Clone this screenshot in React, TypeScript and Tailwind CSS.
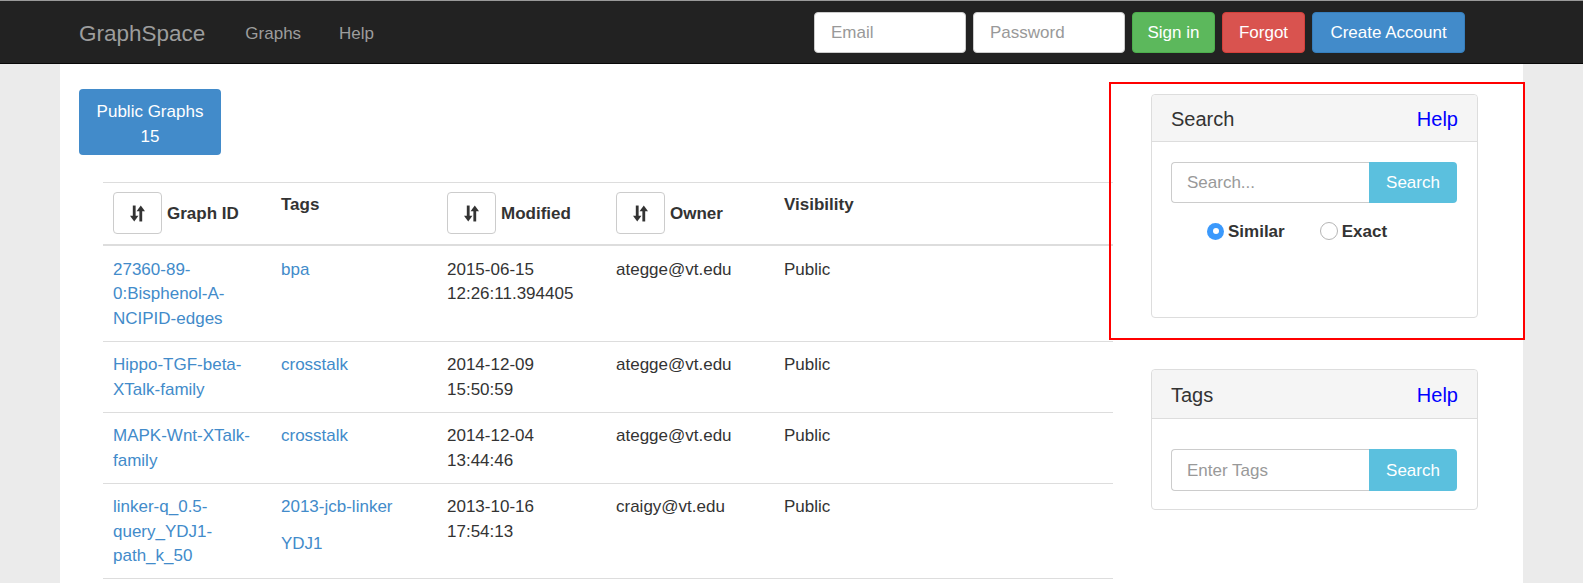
const rows = [
  {
    id: ['27360-89-', '0:Bisphenol-A-', 'NCIPID-edges'],
    tags: ['bpa'],
    modified: ['2015-06-15', '12:26:11.394405'],
    owner: 'ategge@vt.edu',
  },
  {
    id: ['Hippo-TGF-beta-', 'XTalk-family'],
    tags: ['crosstalk'],
    modified: ['2014-12-09', '15:50:59'],
    owner: 'ategge@vt.edu',
  },
  {
    id: ['MAPK-Wnt-XTalk-', 'family'],
    tags: ['crosstalk'],
    modified: ['2014-12-04', '13:44:46'],
    owner: 'ategge@vt.edu',
  },
  {
    id: ['linker-q_0.5-', 'query_YDJ1-', 'path_k_50'],
    tags: ['2013-jcb-linker', 'YDJ1'],
    modified: ['2013-10-16', '17:54:13'],
    owner: 'craigy@vt.edu',
  },
];

function SortIcon() {
  return (
    <svg width="15" height="17" viewBox="0 0 16 17" fill="#333">
      <rect x="3" y="0" width="3" height="12" />
      <polygon points="0,11 9,11 4.5,17" />
      <rect x="10" y="5" width="3" height="12" />
      <polygon points="7,6 16,6 11.5,0" />
    </svg>
  );
}

function SortButton() {
  return (
    <button className="flex h-[42px] w-[49px] shrink-0 items-center justify-center rounded-[4px] border border-[#ccc] bg-white">
      <SortIcon />
    </button>
  );
}

function Panel({
  title,
  children,
  headClass,
  bodyClass,
}: {
  title: string;
  children: React.ReactNode;
  headClass: string;
  bodyClass: string;
}) {
  return (
    <div className="w-[327px] rounded-[4px] border border-[#ddd] bg-white">
      <div
        className={`flex items-center justify-between rounded-t-[4px] border-b border-[#ddd] bg-[#f5f5f5] px-[19px] pt-[3px] text-[20px] ${headClass}`}
      >
        <span className="text-[#333]">{title}</span>
        <a className="text-[#0000ff]">Help</a>
      </div>
      <div className={bodyClass}>{children}</div>
    </div>
  );
}

function SearchGroup({ placeholder, tall }: { placeholder: string; tall?: boolean }) {
  return (
    <div className={tall ? 'flex h-[42px] w-[286px]' : 'flex h-[41px] w-[286px]'}>
      <div className="flex flex-1 items-center rounded-l-[4px] border border-r-0 border-[#ccc] px-[15px] pt-[2px] text-[#999]">
        {placeholder}
      </div>
      <button className="w-[88px] rounded-r-[4px] bg-[#5bc0de] pt-[2px] text-white">Search</button>
    </div>
  );
}

export default function App() {
  return (
    <div className="flex min-h-screen flex-col bg-[#ebebeb] font-['Liberation_Sans',Arial,sans-serif] text-[17px] leading-[24.5px] text-[#333]">
      <div className="h-px bg-[#9a9a9a]" />
      <nav className="flex h-[63px] items-center border-b border-[#080808] bg-[#222] pl-[79px] pr-[118px]">
        <span className="pt-[4px] text-[22.5px] text-[#9d9d9d]">GraphSpace</span>
        <span className="ml-[40px] pt-[4px] text-[#9d9d9d]">Graphs</span>
        <span className="ml-[38px] pt-[4px] text-[#9d9d9d]">Help</span>
        <div className="ml-auto flex items-center gap-[7px]">
          <div className="flex h-[41px] w-[152px] items-center rounded-[4px] border border-[#ccc] bg-white px-[16px] pt-[2px] text-[#999]">
            Email
          </div>
          <div className="flex h-[41px] w-[152px] items-center rounded-[4px] border border-[#ccc] bg-white px-[16px] pt-[2px] text-[#999]">
            Password
          </div>
          <button className="h-[41px] w-[83px] rounded-[4px] border border-[#4cae4c] bg-[#5cb85c] pt-[2px] text-white">
            Sign in
          </button>
          <button className="h-[41px] w-[83px] rounded-[4px] border border-[#d43f3a] bg-[#d9534f] pt-[2px] text-white">
            Forgot
          </button>
          <button className="h-[41px] w-[153px] rounded-[4px] border border-[#357ebd] bg-[#428bca] pt-[2px] text-white">
            Create Account
          </button>
        </div>
      </nav>

      <div className="flex flex-1">
        <div className="w-[60px] shrink-0" />
        <div className="flex w-[1463px] shrink-0 bg-white">
          <div className="w-[1049px] shrink-0">
            <button className="ml-[19px] mt-[25px] h-[66px] w-[142px] rounded-[4px] bg-[#428bca] pt-[3px] leading-[25px] text-white">
              Public Graphs
              <br />
              15
            </button>

            <div className="ml-[43px] mt-[27px] w-[1010px]">
              <div className="grid grid-cols-[168px_166px_169px_168px_1fr] border-b-2 border-t border-[#ddd] font-bold">
                <div className="flex items-center gap-[5px] px-[10px] pb-[10px] pt-[9px]">
                  <SortButton />
                  <span className="pt-[2px]">Graph ID</span>
                </div>
                <div className="px-[10px] pt-[10px]">Tags</div>
                <div className="flex items-center gap-[5px] px-[10px] pb-[10px] pt-[9px]">
                  <SortButton />
                  <span className="pt-[2px]">Modified</span>
                </div>
                <div className="flex items-center gap-[5px] px-[10px] pb-[10px] pt-[9px]">
                  <SortButton />
                  <span className="pt-[2px]">Owner</span>
                </div>
                <div className="px-[10px] pt-[10px]">Visibility</div>
              </div>

              {rows.map((r) => (
                <div
                  key={r.id.join('')}
                  className="grid grid-cols-[168px_166px_169px_168px_1fr] border-b border-[#ddd]"
                >
                  <div className="px-[10px] pb-[9.5px] pt-[11.5px] text-[#428bca]">
                    {r.id.map((line) => (
                      <div key={line}>{line}</div>
                    ))}
                  </div>
                  <div className="space-y-[12.5px] px-[10px] pb-[9.5px] pt-[11.5px] text-[#428bca]">
                    {r.tags.map((t) => (
                      <div key={t}>{t}</div>
                    ))}
                  </div>
                  <div className="px-[10px] pb-[9.5px] pt-[11.5px]">
                    {r.modified.map((line) => (
                      <div key={line}>{line}</div>
                    ))}
                  </div>
                  <div className="px-[10px] pb-[9.5px] pt-[11.5px]">{r.owner}</div>
                  <div className="px-[10px] pb-[9.5px] pt-[11.5px]">Public</div>
                </div>
              ))}
            </div>
          </div>

          <div className="shrink-0">
            <div className="mt-[18px] w-[416px] border-2 border-[#ff0000] pb-[20px] pl-[40px] pt-[10px]">
              <Panel title="Search" headClass="h-[47px]" bodyClass="h-[175px] px-[19px] pt-[20px]">
                <SearchGroup placeholder="Search..." />
                <div className="mt-[15px] flex items-center pl-[36px] font-bold">
                  <span className="flex h-[17px] w-[17px] items-center justify-center rounded-full bg-[#3b99fc]">
                    <span className="h-[6px] w-[6px] rounded-full bg-white" />
                  </span>
                  <span className="ml-[4px] pt-[2px]">Similar</span>
                  <span className="ml-[35px] h-[18px] w-[18px] rounded-full border border-[#b5b5b5] bg-white" />
                  <span className="ml-[4px] pt-[2px]">Exact</span>
                </div>
              </Panel>
            </div>
            <div className="ml-[42px] mt-[29px]">
              <Panel title="Tags" headClass="h-[49px]" bodyClass="px-[19px] pb-[18px] pt-[30px]">
                <SearchGroup placeholder="Enter Tags" tall />
              </Panel>
            </div>
          </div>
        </div>
        <div className="flex-1" />
      </div>
    </div>
  );
}
